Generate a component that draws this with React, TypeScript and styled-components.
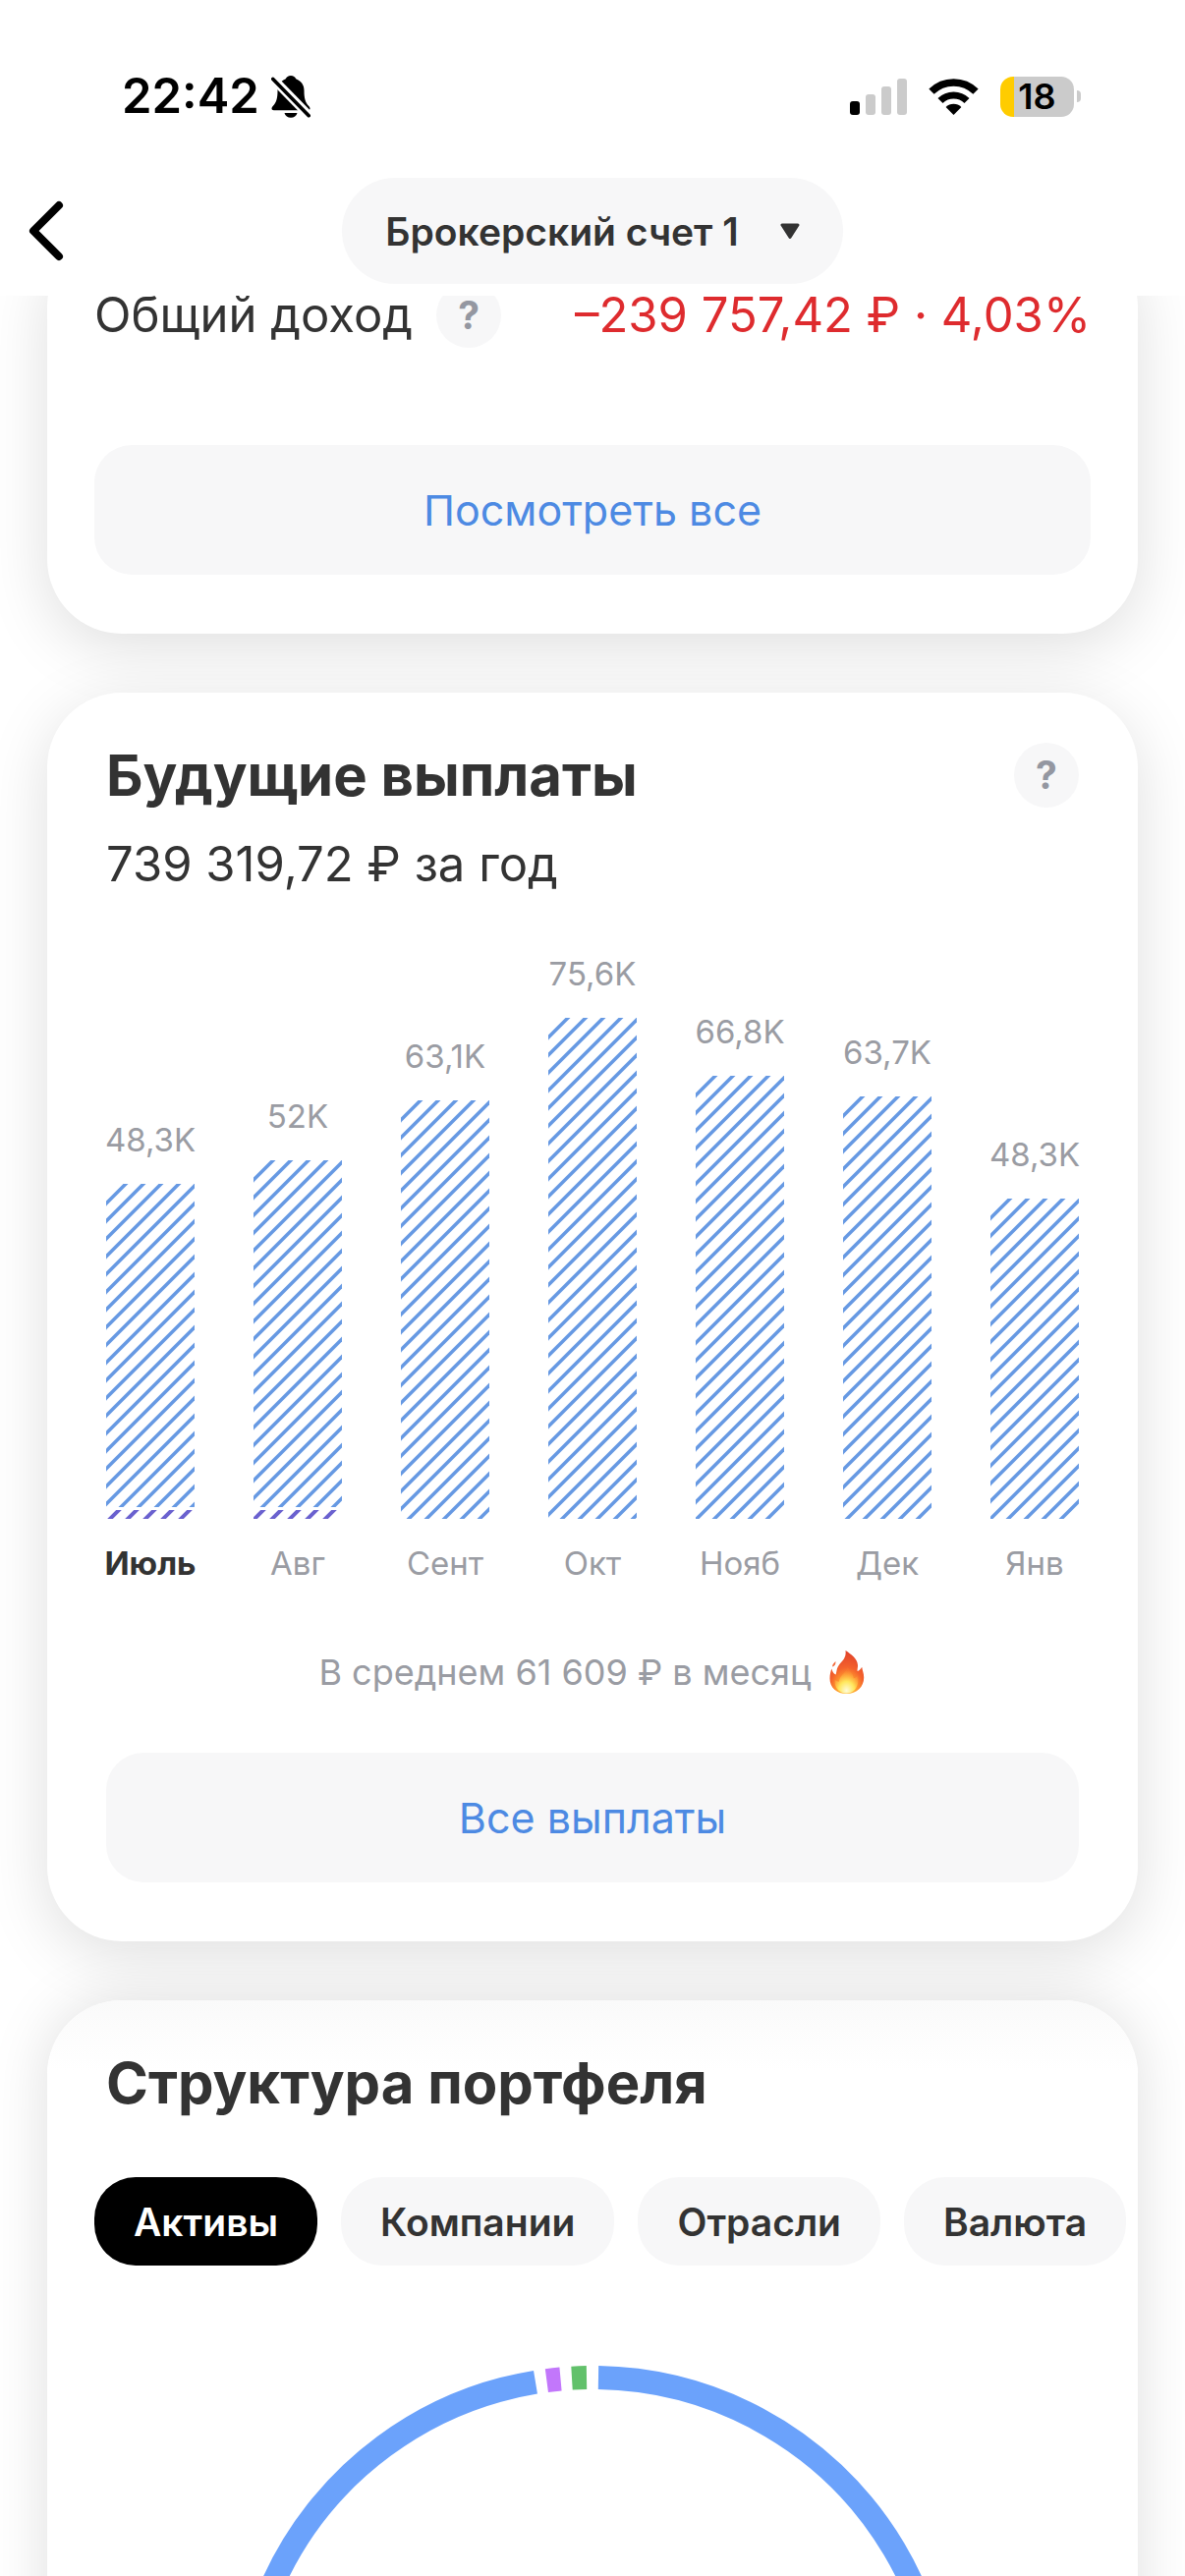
import React from "react";
import styled, { createGlobalStyle } from "styled-components";

const ink = "#333333";
const muted = "#9a9ca3";
const soft = "#f7f7f8";
const link = "#4d8ae3";

const GlobalStyle = createGlobalStyle`
  *, *::before, *::after { box-sizing: border-box; }
  body {
    margin: 0;
    background: #ffffff;
    color: ${ink};
    font-family: Inter, "Liberation Sans", sans-serif;
    -webkit-font-smoothing: antialiased;
  }
  button { font: inherit; color: inherit; border: 0; padding: 0; cursor: pointer; }
  h2, p { margin: 0; }
  svg { display: block; flex: none; }
`;

const Screen = styled.div`
  display: flex;
  flex-direction: column;
  height: 100vh;
  overflow: hidden;
`;

const Header = styled.header`
  flex: none;
  padding: 68px 0 12px;
  background: #ffffff;
`;

const StatusBar = styled.div`
  display: flex;
  align-items: center;
  justify-content: space-between;
  height: 60px;
  padding: 0 106px 0 124px;
  color: #000000;
`;

const StatusGroup = styled.div<{ $gap: number }>`
  display: flex;
  align-items: center;
  gap: ${(p) => p.$gap}px;
`;

const Clock = styled.time`
  font-size: 49px;
  line-height: 60px;
  font-weight: 600;
`;

const Battery = styled.div`
  display: flex;
  align-items: center;
  gap: 3px;
`;

const BatteryBody = styled.div`
  display: flex;
  align-items: center;
  justify-content: center;
  width: 75px;
  height: 41px;
  border-radius: 13px;
  background: linear-gradient(90deg, #ffcc00 14px, #cbcbcb 14px);
  font-size: 36px;
  line-height: 41px;
  font-weight: 600;
`;

const BatteryTip = styled.div`
  width: 4px;
  height: 12px;
  border-radius: 0 6px 6px 0;
  background: #cbcbcb;
`;

const NavBar = styled.nav`
  display: grid;
  grid-template-columns: 1fr auto 1fr;
  align-items: center;
  margin-top: 53px;
  padding: 0 24px;
`;

const BackButton = styled.button`
  display: flex;
  justify-self: start;
  background: none;
`;

const AccountButton = styled.button`
  display: flex;
  align-items: center;
  gap: 42px;
  height: 108px;
  padding: 0 44px;
  border-radius: 54px;
  background: ${soft};
  font-size: 39px;
  font-weight: 600;
  white-space: nowrap;
`;

const Content = styled.main`
  flex: 1;
  min-height: 0;
  overflow-x: hidden;
  overflow-y: auto;
  scrollbar-width: none;
`;

const Cards = styled.div`
  display: flex;
  flex-direction: column;
  gap: 60px;
  margin-top: -65px;
  padding: 0 48px 60px;
`;

const Card = styled.section<{ $deep?: boolean }>`
  padding: 51px 48px 60px;
  border-radius: 76px;
  background: ${(p) => (p.$deep ? "linear-gradient(#fafafa, #ffffff 72px)" : "#ffffff")};
  box-shadow: ${(p) =>
    p.$deep
      ? "0 0 60px rgba(0, 0, 0, 0.13)"
      : "0 14px 64px rgba(0, 0, 0, 0.13)"};
`;

const Inset = styled.div`
  padding: 0 12px;
`;

const Row = styled.div`
  display: flex;
  align-items: center;
  justify-content: space-between;
  min-height: 66px;
`;

const RowLabel = styled.div`
  display: flex;
  align-items: center;
  gap: 24px;
`;

const BodyText = styled.p<{ $tone?: string }>`
  font-size: 49px;
  line-height: 68px;
  white-space: nowrap;
  color: ${(p) => p.$tone ?? ink};
`;

const Title = styled.h2`
  font-size: 58px;
  line-height: 66px;
  font-weight: 700;
  white-space: nowrap;
`;

const Subtitle = styled(BodyText)`
  margin-top: 24px;
`;

const HelpButton = styled.button`
  width: 66px;
  height: 66px;
  flex: none;
  border-radius: 50%;
  background: ${soft};
  color: #9497a1;
  font-size: 39px;
  line-height: 66px;
  font-weight: 700;
  text-align: center;
`;

const WideButton = styled.button<{ $top: number }>`
  display: block;
  width: 100%;
  height: 132px;
  margin-top: ${(p) => p.$top}px;
  border-radius: 38px;
  background: ${soft};
  color: ${link};
  font-size: 43px;
`;

const Chart = styled.div`
  display: flex;
  align-items: flex-end;
  justify-content: space-between;
  margin-top: 56px;
`;

const Column = styled.div`
  display: flex;
  flex-direction: column;
  align-items: center;
  gap: 24px;
  width: 90px;
`;

const Stack = styled.div`
  display: flex;
  flex-direction: column;
  gap: 3px;
`;

const ChartText = styled.span<{ $strong?: boolean }>`
  font-size: 33px;
  line-height: 42px;
  white-space: nowrap;
  font-weight: ${(p) => (p.$strong ? 700 : 400)};
  color: ${(p) => (p.$strong ? ink : muted)};
`;

const Average = styled.p`
  display: flex;
  align-items: center;
  justify-content: center;
  gap: 16px;
  margin-top: 66px;
  font-size: 36px;
  line-height: 48px;
  color: ${muted};
  white-space: nowrap;
`;

const Chips = styled.div`
  display: flex;
  gap: 24px;
  margin: 63px -48px 0 0;
  overflow: hidden;
`;

const Chip = styled.button<{ $active?: boolean }>`
  flex: none;
  height: 90px;
  padding: 0 40px;
  border-radius: 42px;
  background: ${(p) => (p.$active ? "#000000" : soft)};
  color: ${(p) => (p.$active ? "#ffffff" : ink)};
  font-size: 39px;
  font-weight: 600;
  white-space: nowrap;
`;

const DonutArea = styled.div`
  display: flex;
  justify-content: center;
  margin-top: 102px;
`;

const BellOff = () => (
  <svg width="40" height="43" viewBox="0 0 40 43" aria-label="Без звука">
    <path
      d="M20 0c2.600 0 4.500 1.500 5.200 3.300C30.500 5.400 33.500 9.500 33.500 15c0 9 1.500 12.500 4.800 16 .8.900 1.200 1.600 1.200 2.500 0 1.200-1 1.700-2.200 1.700H2.700C1.300 35.200.5 34.500.5 33.500c0-.9.400-1.600 1.200-2.500C5 27.500 6.500 24 6.500 15c0-5.500 3-9.600 8.300-11.700C15.500 1.500 17.400 0 20 0z"
      fill="#000"
    />
    <path d="M13.500 38h13c-.8 2.900-3.300 4.800-6.500 4.800s-5.700-1.900-6.500-4.800z" fill="#000" />
    <path d="M0 1.200L40 42.200" stroke="#fff" strokeWidth="9" />
    <path d="M1.800 3.400L38.200 40.700" stroke="#000" strokeWidth="3.600" strokeLinecap="round" />
  </svg>
);

const Signal = () => (
  <svg width="58" height="37" viewBox="0 0 58 37" aria-label="Сигнал сети">
    <rect x="0" y="23" width="10" height="14" rx="3" fill="#000" />
    <rect x="16" y="16" width="10" height="21" rx="3" fill="#cbcbcb" />
    <rect x="32" y="8" width="10" height="29" rx="3" fill="#cbcbcb" />
    <rect x="48" y="0" width="10" height="37" rx="3" fill="#cbcbcb" />
  </svg>
);

const Wifi = () => (
  <svg width="51" height="37" viewBox="0 0 51 37" aria-label="Wi-Fi">
    <path d="M3 13.200A32 32 0 0 1 48 13.200" fill="none" stroke="#000" strokeWidth="7.500" />
    <path d="M12 22.500A19.300 19.300 0 0 1 39 22.500" fill="none" stroke="#000" strokeWidth="7.200" />
    <path d="M25.500 37L17.600 29a11.200 11.200 0 0 1 15.800 0z" fill="#000" />
  </svg>
);

const BackIcon = () => (
  <svg width="46" height="72" viewBox="0 0 46 72" aria-hidden="true">
    <path
      d="M36 10L10 36l26 26"
      fill="none"
      stroke="#000"
      strokeWidth="8"
      strokeLinecap="round"
      strokeLinejoin="round"
    />
  </svg>
);

const Caret = () => (
  <svg width="20" height="17" viewBox="0 0 20 17" aria-hidden="true">
    <path d="M2 2h16l-8 12.500z" fill={ink} stroke={ink} strokeWidth="3" strokeLinejoin="round" />
  </svg>
);

const Flame = () => (
  <svg width="40" height="46" viewBox="0 0 40 46" aria-hidden="true">
    <defs>
      <radialGradient id="flameOuter" cx="0.5" cy="0.9" r="0.85">
        <stop offset="0" stopColor="#ffd24a" />
        <stop offset="0.35" stopColor="#ff9a2e" />
        <stop offset="0.6" stopColor="#f4622c" />
        <stop offset="1" stopColor="#e2452b" />
      </radialGradient>
      <radialGradient id="flameInner" cx="0.5" cy="0.9" r="0.75">
        <stop offset="0" stopColor="#fffbd8" />
        <stop offset="0.45" stopColor="#ffe75c" />
        <stop offset="1" stopColor="#ff9b35" stopOpacity="0.1" />
      </radialGradient>
    </defs>
    <path
      d="M18.500 1c5.500 3.500 12.200 8.300 12.500 15 .1 2.300-.6 4-.4 6 1.800-.6 3.300-2 4.600-4.300.4 3.600 2 6 2 10.800C37.200 38 30 45 19.700 45 9.500 45 2.500 38.800 2.500 29.500c0-4.300.9-7.200 1.800-10 1 3.300 2.200 5.300 4.300 6 1.200-3.500.6-6 3.100-9.500C15 11.500 19.600 8.500 18.500 1z"
      fill="url(#flameOuter)"
    />
    <path d="M8.300 12c-1.400 1.500-3.300 3-3.200 5.600C7 17 9 15 8.300 12z" fill="#f26a3a" />
    <path
      d="M20.500 17c1 4.500 5.800 7 6.200 12.200 1.600-.2 3.300-1.200 4.300-2.700 1.600 8.500-1.500 17.700-11.300 18-8.500.2-12.900-6.500-12-13.700 1.300 1.200 2.700 1.900 4.200 1.900.2-6.500 7.600-8.700 8.600-15.700z"
      fill="url(#flameInner)"
    />
  </svg>
);

type HatchProps = { height: number; phase: number; color: string; thickness: number };

const STEP = 18;
const BAR_WIDTH = 90;

const Hatch = ({ height, phase, color, thickness }: HatchProps) => {
  const lines: number[] = [];
  for (let s = phase; s < BAR_WIDTH + height; s += STEP) lines.push(s);
  return (
    <svg width={BAR_WIDTH} height={height} viewBox={`0 0 ${BAR_WIDTH} ${height}`} aria-hidden="true">
      {lines.map((s) => (
        <line
          key={s}
          x1={-6}
          y1={s + 6}
          x2={BAR_WIDTH + 6}
          y2={s - BAR_WIDTH - 6}
          stroke={color}
          strokeWidth={thickness}
        />
      ))}
    </svg>
  );
};

type Payout = {
  month: string;
  value: string;
  coupons: number;
  dividends?: { height: number; phase: number };
  current?: boolean;
};

const payouts: Payout[] = [
  { month: "Июль", value: "48,3K", coupons: 329, dividends: { height: 9, phase: 13 }, current: true },
  { month: "Авг", value: "52K", coupons: 353, dividends: { height: 9, phase: 10 } },
  { month: "Сент", value: "63,1K", coupons: 426 },
  { month: "Окт", value: "75,6K", coupons: 510 },
  { month: "Нояб", value: "66,8K", coupons: 451 },
  { month: "Дек", value: "63,7K", coupons: 430 },
  { month: "Янв", value: "48,3K", coupons: 326 },
];

const CENTER = 369;
const RADIUS = 357;

const arc = (from: number, to: number) => {
  const point = (deg: number) => {
    const a = (deg * Math.PI) / 180;
    return `${CENTER + RADIUS * Math.sin(a)} ${CENTER - RADIUS * Math.cos(a)}`;
  };
  return `M${point(from)} A${RADIUS} ${RADIUS} 0 ${to - from > 180 ? 1 : 0} 1 ${point(to)}`;
};

const shares = [
  { color: "#6ba2fb", from: 0.96, to: 350.65 },
  { color: "#c277fb", from: 352.5, to: 354.78 },
  { color: "#62c16b", from: 356.63, to: 359.04 },
];

const Donut = () => (
  <svg width="738" height="738" viewBox="0 0 738 738" role="img" aria-label="Структура портфеля">
    {shares.map((s) => (
      <path key={s.color} d={arc(s.from, s.to)} fill="none" stroke={s.color} strokeWidth="24" />
    ))}
  </svg>
);

const tabs = ["Активы", "Компании", "Отрасли", "Валюта"];

export default function App() {
  const [tab, setTab] = React.useState(tabs[0]);

  return (
    <Screen>
      <GlobalStyle />
      <Header>
        <StatusBar>
          <StatusGroup $gap={12}>
            <Clock>22:42</Clock>
            <BellOff />
          </StatusGroup>
          <StatusGroup $gap={22}>
            <Signal />
            <Wifi />
            <Battery>
              <BatteryBody>18</BatteryBody>
              <BatteryTip />
            </Battery>
          </StatusGroup>
        </StatusBar>
        <NavBar>
          <BackButton aria-label="Назад">
            <BackIcon />
          </BackButton>
          <AccountButton>
            Брокерский счет 1
            <Caret />
          </AccountButton>
        </NavBar>
      </Header>

      <Content>
        <Cards>
          <Card>
            <Row>
              <RowLabel>
                <BodyText>Общий доход</BodyText>
                <HelpButton aria-label="Об общем доходе">?</HelpButton>
              </RowLabel>
              <BodyText $tone="#de2b2e">–239 757,42 ₽ · 4,03%</BodyText>
            </Row>
            <WideButton $top={98}>Посмотреть все</WideButton>
          </Card>

          <Card>
            <Inset>
              <Row>
                <Title>Будущие выплаты</Title>
                <HelpButton aria-label="О будущих выплатах">?</HelpButton>
              </Row>
              <Subtitle>739 319,72 ₽ за год</Subtitle>
              <Chart>
                {payouts.map((p) => (
                  <Column key={p.month}>
                    <ChartText>{p.value}</ChartText>
                    <Stack>
                      <Hatch height={p.coupons} phase={20} color="#6699e3" thickness={3.5} />
                      {p.dividends && (
                        <Hatch
                          height={p.dividends.height}
                          phase={p.dividends.phase}
                          color="#6a61cf"
                          thickness={4}
                        />
                      )}
                    </Stack>
                    <ChartText $strong={p.current}>{p.month}</ChartText>
                  </Column>
                ))}
              </Chart>
              <Average>
                В среднем 61 609 ₽ в месяц
                <Flame />
              </Average>
              <WideButton $top={58}>Все выплаты</WideButton>
            </Inset>
          </Card>

          <Card $deep>
            <Inset>
              <Title>Структура портфеля</Title>
            </Inset>
            <Chips>
              {tabs.map((t) => (
                <Chip key={t} $active={t === tab} aria-pressed={t === tab} onClick={() => setTab(t)}>
                  {t}
                </Chip>
              ))}
            </Chips>
            <DonutArea>
              <Donut />
            </DonutArea>
          </Card>
        </Cards>
      </Content>
    </Screen>
  );
}
